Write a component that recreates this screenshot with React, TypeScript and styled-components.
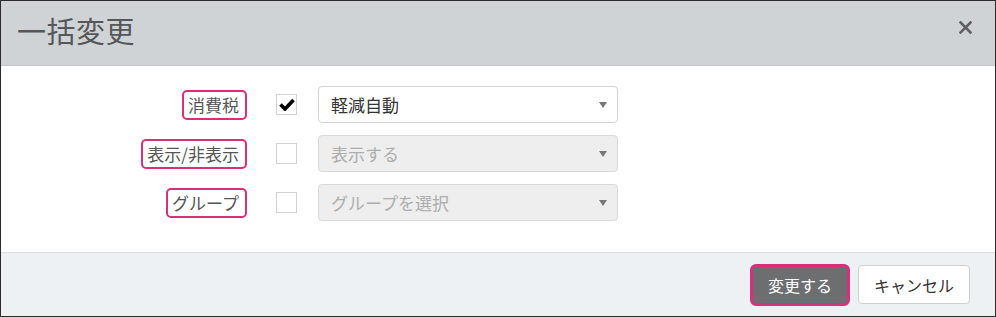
import React from "react";
import styled, { createGlobalStyle } from "styled-components";

const GlobalStyle = createGlobalStyle`
  html, body {
    margin: 0;
    padding: 0;
    background: #ffffff;
  }
  body {
    font-family: "Noto Sans CJK JP", "Noto Sans", sans-serif;
  }
`;

const Modal = styled("div")`
  width: 996px;
  height: 317px;
  box-sizing: border-box;
  border: 1px solid #2b2b2b;
  display: flex;
  flex-direction: column;
  background: #ffffff;
`;

const Header = styled("div")`
  height: 64px;
  flex: none;
  display: flex;
  align-items: center;
  justify-content: space-between;
  background: #d0d3d6;
  border-bottom: 1px solid #c2c5c8;
  padding: 0 22px 0 16px;
`;

const Title = styled("h1")`
  margin: 0;
  font-size: 29px;
  font-weight: 400;
  color: #555759;
  letter-spacing: 0.5px;
  line-height: 1;
  margin-top: -6px;
`;

const Close = styled("button")`
  border: none;
  background: none;
  padding: 0;
  width: 16px;
  height: 16px;
  display: flex;
  align-items: center;
  justify-content: center;
  margin-top: -12px;
  cursor: pointer;
`;

const Body = styled("div")`
  flex: 1;
  display: grid;
  grid-template-columns: 246px 50px 321px;
  grid-auto-rows: 37px;
  row-gap: 12px;
  align-items: center;
  align-content: start;
  justify-content: start;
  padding-top: 20px;
`;

const LabelCell = styled("div")`
  display: flex;
  justify-content: flex-end;
`;

const Label = styled("span")`
  font-size: 17px;
  color: #555;
  line-height: 22px;
  padding: 2px 6px 2px 4px;
  border: 2px solid #d92f78;
  border-radius: 5px;
`;

const Check = styled("span")<{ $checked?: boolean }>`
  width: 21px;
  height: 21px;
  box-sizing: border-box;
  border: 1px solid #d2d2d2;
  background: #fff;
  display: flex;
  align-items: center;
  justify-content: center;
  margin-left: 29px;
`;

const Select = styled("div")<{ $disabled?: boolean }>`
  height: 37px;
  box-sizing: border-box;
  margin-left: 21px;
  display: flex;
  align-items: center;
  justify-content: space-between;
  padding: 0 10px 0 12px;
  border: 1px solid ${(p) => (p.$disabled ? "#d9d9d9" : "#d4d4d4")};
  border-radius: 4px;
  background: ${(p) => (p.$disabled ? "#eeeeee" : "#ffffff")};
  color: ${(p) => (p.$disabled ? "#adadad" : "#333333")};
  font-size: 17px;
`;

const Arrow = styled("span")`
  width: 0;
  height: 0;
  border-left: 4px solid transparent;
  border-right: 4px solid transparent;
  border-top: 6px solid #777;
  margin-top: 1px;
`;

const Footer = styled("div")`
  height: 64px;
  flex: none;
  box-sizing: border-box;
  display: flex;
  align-items: center;
  justify-content: flex-end;
  gap: 8px;
  padding-right: 25px;
  background: #eef1f4;
  border-top: 1px solid #dcdfe2;
`;

const Button = styled("button")<{ $primary?: boolean }>`
  font-family: inherit;
  font-size: 16px;
  height: ${(p) => (p.$primary ? "42px" : "39px")};
  padding: 0 15px;
  border-radius: ${(p) => (p.$primary ? "6px" : "4px")};
  border: ${(p) => (p.$primary ? "3px solid #dc2f7a" : "1px solid #cfcfcf")};
  background: ${(p) => (p.$primary ? "#6c6e70" : "#ffffff")};
  color: ${(p) => (p.$primary ? "#ffffff" : "#333333")};
  cursor: pointer;
`;

const rows = [
  { label: "消費税", checked: true, value: "軽減自動", disabled: false },
  { label: "表示/非表示", checked: false, value: "表示する", disabled: true },
  { label: "グループ", checked: false, value: "グループを選択", disabled: true },
];

export default function App() {
  return (
    <>
      <GlobalStyle />
      <Modal>
        <Header>
          <Title>一括変更</Title>
          <Close aria-label="close">
            <svg width="13" height="13" viewBox="0 0 13 13">
              <path
                d="M1.5 1.5 L11.5 11.5 M11.5 1.5 L1.5 11.5"
                stroke="#5f6163"
                strokeWidth="2.6"
                strokeLinecap="square"
              />
            </svg>
          </Close>
        </Header>
        <Body>
          {rows.map((r) => (
            <React.Fragment key={r.label}>
              <LabelCell>
                <Label>{r.label}</Label>
              </LabelCell>
              <Check $checked={r.checked}>
                {r.checked && (
                  <svg width="16" height="13" viewBox="0 0 16 13">
                    <path
                      d="M1.5 6.5 L6 11 L14.5 2"
                      stroke="#000"
                      strokeWidth="3.6"
                      fill="none"
                    />
                  </svg>
                )}
              </Check>
              <Select $disabled={r.disabled}>
                <span>{r.value}</span>
                <Arrow />
              </Select>
            </React.Fragment>
          ))}
        </Body>
        <Footer>
          <Button $primary>変更する</Button>
          <Button>キャンセル</Button>
        </Footer>
      </Modal>
    </>
  );
}
